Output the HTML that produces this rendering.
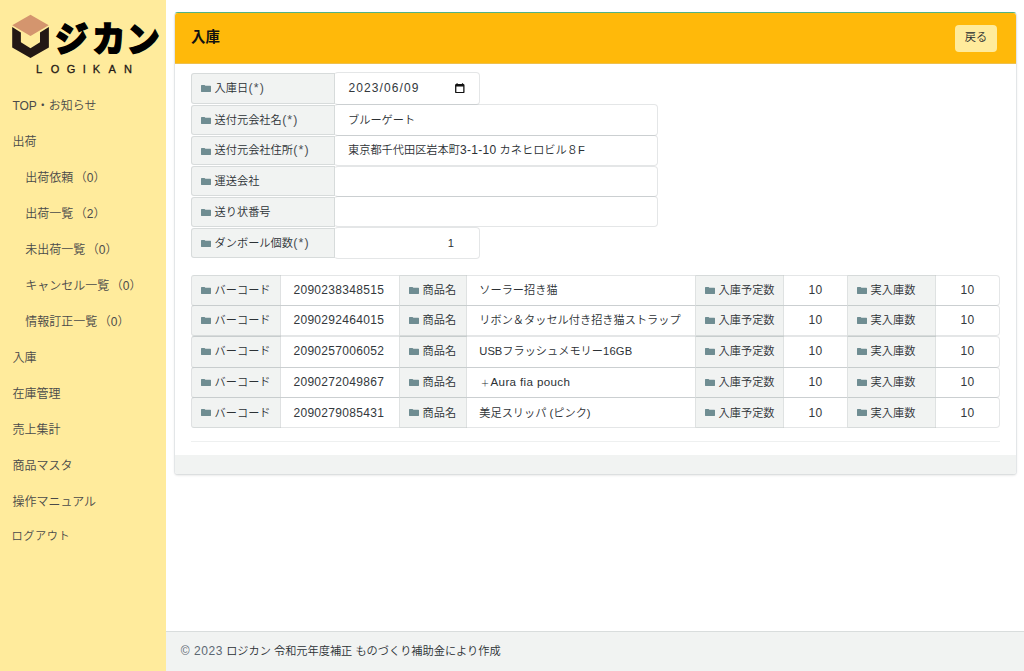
<!DOCTYPE html>
<html lang="ja">
<head>
<meta charset="utf-8">
<title>ロジカン - 入庫</title>
<style>
*{box-sizing:border-box;margin:0;padding:0}
html,body{width:1024px;height:671px;overflow:hidden;background:#fff}
body{position:relative;font-family:"Liberation Sans","Noto Sans CJK JP",sans-serif;font-size:11.2px;color:#2c3135;font-weight:350}
.sidebar{position:absolute;left:0;top:0;width:166px;height:671px;background:#ffeb9c}
.brand{position:absolute;left:0;top:0;width:166px;height:88px}
.brand svg{position:absolute;left:0;top:0}
.nav{list-style:none;position:absolute;left:0;top:88px;width:166px}
.nav li{height:36px;line-height:36px;font-size:12px;color:#4a4a4a;padding-left:12.4px;white-space:nowrap}
.nav li.sub{padding-left:25.2px}
.nav li span{margin-left:1.6px}
.nav li.last{margin-top:-2px;font-size:11.2px;padding-left:11.6px;letter-spacing:.56px}
.card{position:absolute;left:174px;top:12px;width:843px;height:463px;background:#fff;border:1px solid #e3e6e8;border-top-color:#52b283;border-bottom-color:#dcdfe0;border-radius:4px;box-shadow:0 1px 2px rgba(0,0,0,.08)}
.card-header{position:absolute;left:0;top:0;width:841px;height:51px;background:#ffb90a;border-bottom:1px solid #eec04e;border-radius:3px 3px 0 0}
.card-header h1{position:absolute;left:16px;top:0;line-height:48px;font-size:14.4px;font-weight:bold;color:#111}
.btn{position:absolute;left:780px;top:12px;width:42px;height:27px;border-radius:4px;background:#ffeb9c;color:#23282c;font-size:11.2px;line-height:24px;text-align:center}
.card-footer{position:absolute;left:0;top:442px;width:841px;height:19px;background:#f1f3f2;border-radius:0 0 3px 3px}
.row{position:absolute;left:0;width:840px}
.lbl{position:absolute;top:1px;background:#f1f3f2;border:1px solid rgba(0,22,30,.105);border-radius:3px 0 0 3px;padding-left:22.6px;white-space:nowrap;color:#2c3135}
.lbl i{position:absolute;left:9px;top:11px;width:10px;height:7px}
.lbl i svg{display:block}
.inp{position:absolute;top:0;background:#fff;background-clip:padding-box;border:1px solid rgba(0,22,30,.105);border-left-color:transparent;border-radius:4px;padding-left:13px;white-space:nowrap}
.row .lbl{left:16px;width:144px}
.row .inp{left:159px}
.f-short .inp{width:146px}
.f-long .inp{width:324px}
.cal{position:absolute;left:120px;top:10px}
.num{position:absolute;right:25px;top:0}
.date{font-size:12px;letter-spacing:1.08px;margin-left:.6px;color:#33383c}
.n{font-size:12px;letter-spacing:.32px;color:#33383c}
.a{font-size:12px;letter-spacing:.32px}
.w{font-size:11.6px;letter-spacing:.36px;position:relative;top:-1px}
.g{letter-spacing:.16px}
.p{display:inline-block;width:11.2px;text-align:center;font-size:8.5px;line-height:1;position:relative;top:-1.5px}
.lbl b{font-weight:normal;font-size:12.4px;letter-spacing:1.1px;margin-left:.4px;color:#4b5055}
.item .lbl{top:0;height:100%;border-radius:0;border-left-color:rgba(0,22,30,.075);border-right-color:rgba(0,22,30,.075)}
.item .cell{position:absolute;top:0;height:100%;background:#fff;background-clip:padding-box;border:1px solid rgba(0,22,30,.105);border-left-color:transparent;border-right-color:transparent;white-space:nowrap}
.item .c1{left:16px;width:90px}
.item .c2{left:105px;width:120px}
.item .c3{left:224px;width:68px}
.item .c4{left:291px;width:230px}
.item .c5{left:520px;width:89px}
.item .c6{left:608px;width:65px}
.item .c7{left:672px;width:89px}
.item .c8{left:760px;width:65px}
.item .c1{border-radius:3px 0 0 3px}
.item+.item .lbl{border-top-color:rgba(0,22,30,.17)}
.item .c2{padding-left:12.4px}
.item .c4{padding-left:12.3px}
.item .c6,.item .c8{text-align:center}
.item .c8{border-radius:0 4px 4px 0;border-right-color:rgba(0,22,30,.105)}
hr{position:absolute;left:16px;width:809px;top:428px;border:0;border-top:1px solid #eef0f0}
.footer{position:absolute;left:166px;top:631px;width:858px;height:40px;background:#f1f3f2;border-top:1px solid #d9dddd;padding-left:14.8px;line-height:39px;white-space:nowrap}
.footer span{color:#5c6873;font-size:12px;letter-spacing:.56px}
</style>
</head>
<body>
<aside class="sidebar">
 <div class="brand">
  <svg width="166" height="88" viewBox="0 0 207.5 110" role="img" aria-label="ロジカン LOGIKAN">
   <title>ロジカン LOGIKAN</title>
   <polygon points="38.1,18.4 60.9,31.6 38.1,44.9 15.25,31.6" fill="#d4956e"/>
   <polygon points="15.25,33.75 26.1,40.75 26.1,52.9 38.1,60.25 50,52.9 50,40.75 61.1,33.75 61.1,59.5 38.1,72.5 15.25,59.5" fill="#231815"/>
   <text transform="scale(0.955 1)" x="72 120.9 165.7" y="64.9" font-family="'Noto Sans CJK JP','Liberation Sans',sans-serif" font-weight="900" font-size="43.5" fill="#000" stroke="#000" stroke-width="1.7" stroke-linejoin="miter">ジカン</text>
   <text y="90.9" font-family="'Liberation Sans',sans-serif" font-size="13.8" fill="#231815" stroke="#231815" stroke-width="0.35" x="45 63.5 83.5 103.5 116 135.5 155">LOGIKAN</text>
  </svg>
 </div>
 <ul class="nav">
  <li>TOP・お知らせ</li>
  <li>出荷</li>
  <li class="sub">出荷依頼<span>（0）</span></li>
  <li class="sub">出荷一覧<span>（2）</span></li>
  <li class="sub">未出荷一覧<span>（0）</span></li>
  <li class="sub">キャンセル一覧<span>（0）</span></li>
  <li class="sub">情報訂正一覧<span>（0）</span></li>
  <li>入庫</li>
  <li>在庫管理</li>
  <li>売上集計</li>
  <li>商品マスタ</li>
  <li>操作マニュアル</li>
  <li class="last">ログアウト</li>
 </ul>
</aside>
<main class="card">
 <div class="card-header"><h1>入庫</h1><a class="btn">戻る</a></div>
 <div class="row f-short" style="top:59px;height:33px"><label class="lbl" style="top:1px;height:31px;line-height:29px"><i><svg width="10" height="7" viewBox="0 0 12.2 8.5" preserveAspectRatio="none"><path d="M0 0.6Q0 0 0.6 0H4.1Q4.5 0 4.8 0.4L5.3 1H11.6Q12.2 1 12.2 1.6V7.9Q12.2 8.5 11.6 8.5H0.6Q0 8.5 0 7.9Z" fill="#6f8d92"/></svg></i>入庫日<b>(*)</b></label><div class="inp" style="height:33px;line-height:31px"><span class="date">2023/06/09</span><svg class="cal" width="9.6" height="10.4" viewBox="0 0 12 13"><path d="M2.6 0.2V1.5M9.4 0.2V1.5" stroke="#111" stroke-width="1.5"/><rect x="0.9" y="1.9" width="10.2" height="10.2" rx="0.8" fill="none" stroke="#111" stroke-width="1.6"/><rect x="0.9" y="1.9" width="10.2" height="2.5" fill="#111"/></svg></div></div>
 <div class="row f-long" style="top:91px;height:32px"><label class="lbl" style="top:1px;height:30px;line-height:28px"><i><svg width="10" height="7" viewBox="0 0 12.2 8.5" preserveAspectRatio="none"><path d="M0 0.6Q0 0 0.6 0H4.1Q4.5 0 4.8 0.4L5.3 1H11.6Q12.2 1 12.2 1.6V7.9Q12.2 8.5 11.6 8.5H0.6Q0 8.5 0 7.9Z" fill="#6f8d92"/></svg></i>送付元会社名<b>(*)</b></label><div class="inp" style="height:32px;line-height:30px">ブルーゲート</div></div>
 <div class="row f-long" style="top:122px;height:31px"><label class="lbl" style="top:1px;height:29px;line-height:27px"><i><svg width="10" height="7" viewBox="0 0 12.2 8.5" preserveAspectRatio="none"><path d="M0 0.6Q0 0 0.6 0H4.1Q4.5 0 4.8 0.4L5.3 1H11.6Q12.2 1 12.2 1.6V7.9Q12.2 8.5 11.6 8.5H0.6Q0 8.5 0 7.9Z" fill="#6f8d92"/></svg></i>送付元会社住所<b>(*)</b></label><div class="inp" style="height:31px;line-height:29px">東京都千代田区岩本町<span class="a">3-1-10</span> カネヒロビル８F</div></div>
 <div class="row f-long" style="top:153px;height:31px"><label class="lbl" style="top:0px;height:30px;line-height:28px"><i><svg width="10" height="7" viewBox="0 0 12.2 8.5" preserveAspectRatio="none"><path d="M0 0.6Q0 0 0.6 0H4.1Q4.5 0 4.8 0.4L5.3 1H11.6Q12.2 1 12.2 1.6V7.9Q12.2 8.5 11.6 8.5H0.6Q0 8.5 0 7.9Z" fill="#6f8d92"/></svg></i>運送会社</label><div class="inp" style="height:31px;line-height:29px"></div></div>
 <div class="row f-long" style="top:183px;height:31px"><label class="lbl" style="top:1px;height:30px;line-height:28px"><i><svg width="10" height="7" viewBox="0 0 12.2 8.5" preserveAspectRatio="none"><path d="M0 0.6Q0 0 0.6 0H4.1Q4.5 0 4.8 0.4L5.3 1H11.6Q12.2 1 12.2 1.6V7.9Q12.2 8.5 11.6 8.5H0.6Q0 8.5 0 7.9Z" fill="#6f8d92"/></svg></i>送り状番号</label><div class="inp" style="height:31px;line-height:29px"></div></div>
 <div class="row f-short" style="top:214px;height:32px"><label class="lbl" style="top:1px;height:30px;line-height:28px"><i><svg width="10" height="7" viewBox="0 0 12.2 8.5" preserveAspectRatio="none"><path d="M0 0.6Q0 0 0.6 0H4.1Q4.5 0 4.8 0.4L5.3 1H11.6Q12.2 1 12.2 1.6V7.9Q12.2 8.5 11.6 8.5H0.6Q0 8.5 0 7.9Z" fill="#6f8d92"/></svg></i>ダンボール個数<b>(*)</b></label><div class="inp" style="height:32px;line-height:30px"><span class="num">1</span></div></div>
 <div class="row item" style="top:262px;height:31px;line-height:29px"><label class="lbl c1"><i><svg width="10" height="7" viewBox="0 0 12.2 8.5" preserveAspectRatio="none"><path d="M0 0.6Q0 0 0.6 0H4.1Q4.5 0 4.8 0.4L5.3 1H11.6Q12.2 1 12.2 1.6V7.9Q12.2 8.5 11.6 8.5H0.6Q0 8.5 0 7.9Z" fill="#6f8d92"/></svg></i>バーコード</label><div class="cell c2"><span class="n">2090238348515</span></div><label class="lbl c3"><i><svg width="10" height="7" viewBox="0 0 12.2 8.5" preserveAspectRatio="none"><path d="M0 0.6Q0 0 0.6 0H4.1Q4.5 0 4.8 0.4L5.3 1H11.6Q12.2 1 12.2 1.6V7.9Q12.2 8.5 11.6 8.5H0.6Q0 8.5 0 7.9Z" fill="#6f8d92"/></svg></i>商品名</label><div class="cell c4">ソーラー招き猫</div><label class="lbl c5"><i><svg width="10" height="7" viewBox="0 0 12.2 8.5" preserveAspectRatio="none"><path d="M0 0.6Q0 0 0.6 0H4.1Q4.5 0 4.8 0.4L5.3 1H11.6Q12.2 1 12.2 1.6V7.9Q12.2 8.5 11.6 8.5H0.6Q0 8.5 0 7.9Z" fill="#6f8d92"/></svg></i>入庫予定数</label><div class="cell c6"><span class="n">10</span></div><label class="lbl c7"><i><svg width="10" height="7" viewBox="0 0 12.2 8.5" preserveAspectRatio="none"><path d="M0 0.6Q0 0 0.6 0H4.1Q4.5 0 4.8 0.4L5.3 1H11.6Q12.2 1 12.2 1.6V7.9Q12.2 8.5 11.6 8.5H0.6Q0 8.5 0 7.9Z" fill="#6f8d92"/></svg></i>実入庫数</label><div class="cell c8"><span class="n">10</span></div></div>
 <div class="row item" style="top:292px;height:31px;line-height:29px"><label class="lbl c1"><i><svg width="10" height="7" viewBox="0 0 12.2 8.5" preserveAspectRatio="none"><path d="M0 0.6Q0 0 0.6 0H4.1Q4.5 0 4.8 0.4L5.3 1H11.6Q12.2 1 12.2 1.6V7.9Q12.2 8.5 11.6 8.5H0.6Q0 8.5 0 7.9Z" fill="#6f8d92"/></svg></i>バーコード</label><div class="cell c2"><span class="n">2090292464015</span></div><label class="lbl c3"><i><svg width="10" height="7" viewBox="0 0 12.2 8.5" preserveAspectRatio="none"><path d="M0 0.6Q0 0 0.6 0H4.1Q4.5 0 4.8 0.4L5.3 1H11.6Q12.2 1 12.2 1.6V7.9Q12.2 8.5 11.6 8.5H0.6Q0 8.5 0 7.9Z" fill="#6f8d92"/></svg></i>商品名</label><div class="cell c4">リボン＆タッセル付き招き猫ストラップ</div><label class="lbl c5"><i><svg width="10" height="7" viewBox="0 0 12.2 8.5" preserveAspectRatio="none"><path d="M0 0.6Q0 0 0.6 0H4.1Q4.5 0 4.8 0.4L5.3 1H11.6Q12.2 1 12.2 1.6V7.9Q12.2 8.5 11.6 8.5H0.6Q0 8.5 0 7.9Z" fill="#6f8d92"/></svg></i>入庫予定数</label><div class="cell c6"><span class="n">10</span></div><label class="lbl c7"><i><svg width="10" height="7" viewBox="0 0 12.2 8.5" preserveAspectRatio="none"><path d="M0 0.6Q0 0 0.6 0H4.1Q4.5 0 4.8 0.4L5.3 1H11.6Q12.2 1 12.2 1.6V7.9Q12.2 8.5 11.6 8.5H0.6Q0 8.5 0 7.9Z" fill="#6f8d92"/></svg></i>実入庫数</label><div class="cell c8"><span class="n">10</span></div></div>
 <div class="row item" style="top:323px;height:32px;line-height:29px"><label class="lbl c1"><i><svg width="10" height="7" viewBox="0 0 12.2 8.5" preserveAspectRatio="none"><path d="M0 0.6Q0 0 0.6 0H4.1Q4.5 0 4.8 0.4L5.3 1H11.6Q12.2 1 12.2 1.6V7.9Q12.2 8.5 11.6 8.5H0.6Q0 8.5 0 7.9Z" fill="#6f8d92"/></svg></i>バーコード</label><div class="cell c2"><span class="n">2090257006052</span></div><label class="lbl c3"><i><svg width="10" height="7" viewBox="0 0 12.2 8.5" preserveAspectRatio="none"><path d="M0 0.6Q0 0 0.6 0H4.1Q4.5 0 4.8 0.4L5.3 1H11.6Q12.2 1 12.2 1.6V7.9Q12.2 8.5 11.6 8.5H0.6Q0 8.5 0 7.9Z" fill="#6f8d92"/></svg></i>商品名</label><div class="cell c4">USBフラッシュメモリー<span class="g">16GB</span></div><label class="lbl c5"><i><svg width="10" height="7" viewBox="0 0 12.2 8.5" preserveAspectRatio="none"><path d="M0 0.6Q0 0 0.6 0H4.1Q4.5 0 4.8 0.4L5.3 1H11.6Q12.2 1 12.2 1.6V7.9Q12.2 8.5 11.6 8.5H0.6Q0 8.5 0 7.9Z" fill="#6f8d92"/></svg></i>入庫予定数</label><div class="cell c6"><span class="n">10</span></div><label class="lbl c7"><i><svg width="10" height="7" viewBox="0 0 12.2 8.5" preserveAspectRatio="none"><path d="M0 0.6Q0 0 0.6 0H4.1Q4.5 0 4.8 0.4L5.3 1H11.6Q12.2 1 12.2 1.6V7.9Q12.2 8.5 11.6 8.5H0.6Q0 8.5 0 7.9Z" fill="#6f8d92"/></svg></i>実入庫数</label><div class="cell c8"><span class="n">10</span></div></div>
 <div class="row item" style="top:354px;height:31px;line-height:29px"><label class="lbl c1"><i><svg width="10" height="7" viewBox="0 0 12.2 8.5" preserveAspectRatio="none"><path d="M0 0.6Q0 0 0.6 0H4.1Q4.5 0 4.8 0.4L5.3 1H11.6Q12.2 1 12.2 1.6V7.9Q12.2 8.5 11.6 8.5H0.6Q0 8.5 0 7.9Z" fill="#6f8d92"/></svg></i>バーコード</label><div class="cell c2"><span class="n">2090272049867</span></div><label class="lbl c3"><i><svg width="10" height="7" viewBox="0 0 12.2 8.5" preserveAspectRatio="none"><path d="M0 0.6Q0 0 0.6 0H4.1Q4.5 0 4.8 0.4L5.3 1H11.6Q12.2 1 12.2 1.6V7.9Q12.2 8.5 11.6 8.5H0.6Q0 8.5 0 7.9Z" fill="#6f8d92"/></svg></i>商品名</label><div class="cell c4"><span class="p">＋</span><span class="w">Aura fia pouch</span></div><label class="lbl c5"><i><svg width="10" height="7" viewBox="0 0 12.2 8.5" preserveAspectRatio="none"><path d="M0 0.6Q0 0 0.6 0H4.1Q4.5 0 4.8 0.4L5.3 1H11.6Q12.2 1 12.2 1.6V7.9Q12.2 8.5 11.6 8.5H0.6Q0 8.5 0 7.9Z" fill="#6f8d92"/></svg></i>入庫予定数</label><div class="cell c6"><span class="n">10</span></div><label class="lbl c7"><i><svg width="10" height="7" viewBox="0 0 12.2 8.5" preserveAspectRatio="none"><path d="M0 0.6Q0 0 0.6 0H4.1Q4.5 0 4.8 0.4L5.3 1H11.6Q12.2 1 12.2 1.6V7.9Q12.2 8.5 11.6 8.5H0.6Q0 8.5 0 7.9Z" fill="#6f8d92"/></svg></i>実入庫数</label><div class="cell c8"><span class="n">10</span></div></div>
 <div class="row item" style="top:384px;height:31px;line-height:31px"><label class="lbl c1"><i><svg width="10" height="7" viewBox="0 0 12.2 8.5" preserveAspectRatio="none"><path d="M0 0.6Q0 0 0.6 0H4.1Q4.5 0 4.8 0.4L5.3 1H11.6Q12.2 1 12.2 1.6V7.9Q12.2 8.5 11.6 8.5H0.6Q0 8.5 0 7.9Z" fill="#6f8d92"/></svg></i>バーコード</label><div class="cell c2"><span class="n">2090279085431</span></div><label class="lbl c3"><i><svg width="10" height="7" viewBox="0 0 12.2 8.5" preserveAspectRatio="none"><path d="M0 0.6Q0 0 0.6 0H4.1Q4.5 0 4.8 0.4L5.3 1H11.6Q12.2 1 12.2 1.6V7.9Q12.2 8.5 11.6 8.5H0.6Q0 8.5 0 7.9Z" fill="#6f8d92"/></svg></i>商品名</label><div class="cell c4">美足スリッパ (ピンク)</div><label class="lbl c5"><i><svg width="10" height="7" viewBox="0 0 12.2 8.5" preserveAspectRatio="none"><path d="M0 0.6Q0 0 0.6 0H4.1Q4.5 0 4.8 0.4L5.3 1H11.6Q12.2 1 12.2 1.6V7.9Q12.2 8.5 11.6 8.5H0.6Q0 8.5 0 7.9Z" fill="#6f8d92"/></svg></i>入庫予定数</label><div class="cell c6"><span class="n">10</span></div><label class="lbl c7"><i><svg width="10" height="7" viewBox="0 0 12.2 8.5" preserveAspectRatio="none"><path d="M0 0.6Q0 0 0.6 0H4.1Q4.5 0 4.8 0.4L5.3 1H11.6Q12.2 1 12.2 1.6V7.9Q12.2 8.5 11.6 8.5H0.6Q0 8.5 0 7.9Z" fill="#6f8d92"/></svg></i>実入庫数</label><div class="cell c8"><span class="n">10</span></div></div>
 <hr>
 <div class="card-footer"></div>
</main>
<footer class="footer"><span>© 2023</span> ロジカン 令和元年度補正 ものづくり補助金により作成</footer>
</body>
</html>
